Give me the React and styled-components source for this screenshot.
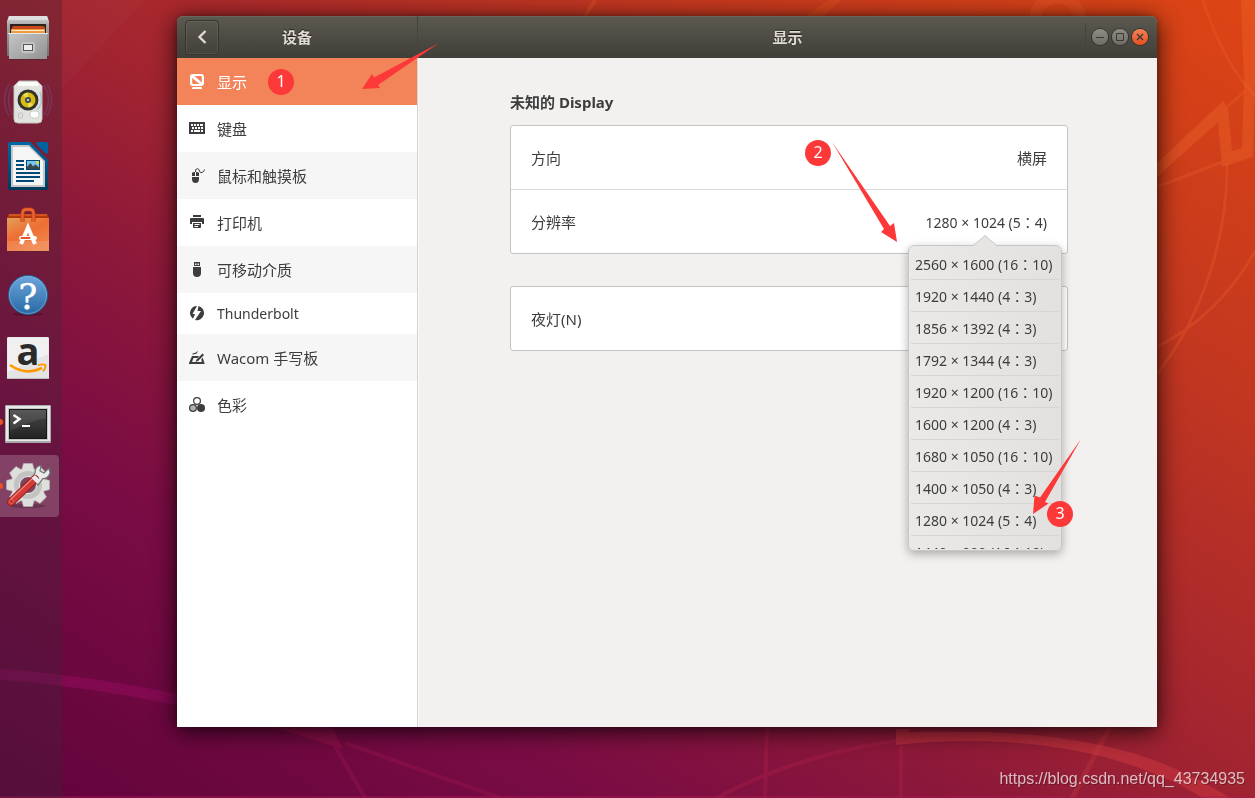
import React from "react";
import styled, { createGlobalStyle } from "styled-components";

const GlobalStyle = createGlobalStyle`
  *, *::before, *::after { box-sizing: border-box; }
  html, body { margin: 0; padding: 0; }
  body {
    font-family: "Noto Sans", "Noto Sans CJK SC", sans-serif;
    font-size: 15px;
    line-height: 20px;
    color: #3d3d3d;
  }
  button { font: inherit; color: inherit; border: 0; padding: 0; background: none; cursor: default; }
  ul { list-style: none; margin: 0; padding: 0; }
  h1, h2 { margin: 0; font-size: 15px; font-weight: 700; }
`;

const Desktop = styled.div`
  position: relative;
  display: flex;
  min-height: 100vh;
  overflow: hidden;
  background: linear-gradient(
    to top right,
    #61033c 0%, #7a0c44 24%, #8e1939 40%, #a02331 50%, #c23720 75%, #dd4514 100%
  );
`;

const WallpaperArt = styled.svg`
  position: absolute;
  inset: 0;
  width: 100%;
  height: 100%;
`;

const Dock = styled.nav`
  position: relative;
  display: flex;
  flex-direction: column;
  gap: 2px;
  width: 62px;
  padding-top: 7px;
  background: rgba(60, 40, 55, 0.3);
`;

const Launcher = styled.button`
  position: relative;
  width: 59px;
  height: 62px;
  padding-left: 4px;
  display: flex;
  align-items: center;
  border-radius: 0 4px 4px 0;
  background: ${(p) => (p.$active ? "rgba(255,255,255,0.2)" : "transparent")};
`;

const LauncherArt = styled.svg`
  overflow: visible;
`;

const RunningDot = styled.span`
  position: absolute;
  left: -3px;
  top: 28px;
  width: 6px;
  height: 6px;
  border-radius: 50%;
  background: #e95420;
`;

const Stage = styled.main`
  position: relative;
  flex: 1;
  display: flex;
  padding: 16px 98px 71px 115px;
`;

const Window = styled.section`
  flex: 1;
  display: flex;
  flex-direction: column;
  border-radius: 7px 7px 0 0;
  background: #f2f1ef;
  box-shadow: 0 4px 24px rgba(0, 0, 0, 0.8), 0 0 6px rgba(0, 0, 0, 0.25);
`;

const TitleBar = styled.header`
  display: flex;
  height: 42px;
  border-radius: 6px 6px 0 0;
  background: linear-gradient(#5c5a50, #3f3e38);
  box-shadow: inset 0 1px #6a685e;
  color: #dfdbd2;
  text-shadow: 0 -1px rgba(0, 0, 0, 0.6);
`;

const BarLeft = styled.div`
  display: grid;
  grid-template-columns: 34px 1fr 34px;
  align-items: center;
  width: 241px;
  padding: 0 8px;
  border-right: 1px solid #45443d;
  text-align: center;
`;

const BarRight = styled.div`
  flex: 1;
  display: grid;
  grid-template-columns: 1fr auto 1fr;
  align-items: center;
`;

const BackButton = styled.button`
  display: grid;
  place-items: center;
  height: 35px;
  border: 1px solid #35342e;
  border-radius: 4px;
  box-shadow: inset 0 0 0 1px rgba(255, 255, 255, 0.08);
`;

const WindowControls = styled.div`
  grid-column: 3;
  justify-self: end;
  display: flex;
  align-items: center;
  gap: 4px;
  height: 28px;
  padding: 0 9px 0 6px;
  border-left: 1px solid #44433c;
`;

const ControlButton = styled.button`
  width: 16px;
  height: 16px;
  border-radius: 50%;
  display: grid;
  place-items: center;
  color: #3a3934;
  background: ${(p) => (p.$close ? "linear-gradient(#f78159, #e4501f)" : "linear-gradient(#908e86, #6d6b64)")};
  box-shadow: 0 0 0 1px #35342f;
`;

const Body = styled.div`
  flex: 1;
  display: flex;
`;

const SideBar = styled.nav`
  width: 241px;
  background: #fff;
  border-right: 1px solid #d5d3d1;
`;

const NavLink = styled.a`
  display: flex;
  align-items: center;
  gap: 12px;
  height: ${(p) => (p.$compact ? "41px" : "47px")};
  padding: 0 12px;
  font-size: ${(p) => (p.$compact ? "14px" : "15px")};
  color: ${(p) => (p.$current ? "#fff" : "#3d3d3d")};
  background: ${(p) => (p.$current ? "#f38459" : p.$shaded ? "#f6f6f6" : "#fff")};
  text-decoration: none;
`;

const Panel = styled.div`
  flex: 1;
  padding: 34px 89px 0 91px;
  border-left: 1px solid #faf9f8;
`;

const PanelInner = styled.div`
  max-width: 640px;
  margin: 0 auto;
`;

const Card = styled.div`
  margin-top: ${(p) => (p.$spaced ? "32px" : "13px")};
  background: #fff;
  border: 1px solid #c5c3c0;
  border-radius: 3px;
`;

const CardRow = styled.div`
  position: relative;
  & + & { border-top: 1px solid #dcdad8; }
`;

const RowButton = styled.button`
  display: flex;
  align-items: center;
  justify-content: space-between;
  width: 100%;
  height: 63px;
  padding: 0 20px;
`;

const Resolution = styled.span`
  padding-top: 2px;
  font-family: "Noto Sans", "Noto Sans CJK TC", sans-serif;
  font-size: 14px;
`;

const Popover = styled.div`
  position: absolute;
  z-index: 2;
  top: 55px;
  right: 5px;
  width: 154px;
  padding: 2px 2px 1px;
  border: 1px solid #c9c7c5;
  border-radius: 6px;
  background: linear-gradient(90deg, #eae9e8, #e2e1e0);
  box-shadow: 0 3px 10px rgba(0, 0, 0, 0.3);
`;

const PopoverArrow = styled.svg`
  position: absolute;
  top: -11px;
  left: 64px;
`;

const OptionList = styled.ul`
  height: 301px;
  overflow: hidden;
`;

const Option = styled.button`
  width: 100%;
  height: 32px;
  padding: 2px 0 0 4px;
  text-align: left;
  white-space: nowrap;
  font-family: "Noto Sans", "Noto Sans CJK TC", sans-serif;
  font-size: 14px;
  border-bottom: 1px solid #d6d5d3;
`;

const Annotations = styled.div`
  position: absolute;
  z-index: 3;
  inset: 0;
  pointer-events: none;
`;

const ArrowLayer = styled.svg`
  position: absolute;
  left: 0;
  top: 0;
`;

const Marker = styled.span`
  position: absolute;
  left: ${(p) => p.$x}px;
  top: ${(p) => p.$y}px;
  width: 26px;
  height: 26px;
  border-radius: 50%;
  background: #fc3838;
  color: #fff;
  font-size: 16px;
  line-height: 24px;
  text-align: center;
`;

const Watermark = styled.span`
  position: absolute;
  right: 10px;
  bottom: 9px;
  font-family: "Liberation Sans", sans-serif;
  font-size: 16px;
  color: rgba(255, 255, 255, 0.7);
  text-shadow: 1px 1px rgba(0, 0, 0, 0.25);
`;

function Wallpaper() {
  return (
    <WallpaperArt viewBox="0 0 1255 798" preserveAspectRatio="none" aria-hidden="true">
      <path d="M62 0H145L62 88Z" fill="#fff" opacity=".02" />
      <path d="M-5 673.500Q90 681 180 700" stroke="#a00d68" strokeWidth="11" opacity=".4" fill="none" />
      <path d="M272 727H332L343 749Z" fill="#b01a50" opacity=".35" />
      <g stroke="#b01a50" strokeWidth="4" opacity=".25" fill="none">
        <path d="M335 746L365 798M345 743L500 798" />
        <path d="M767 727L765 798M901 746V798M710 802Q790 756 896 741" stroke="#c0254a" />
        <path d="M1110 727L1072 798" stroke="#d84040" strokeWidth="5" />
      </g>
      <path d="M896 729V745C1000 734 1120 744 1211 803H1238C1160 752 1080 728 909 732V729Z" fill="#d03a40" opacity=".5" />
      <g fill="#f0682c" opacity=".38">
        <path d="M1241 0H1255V80L1253 157L1222 167L1218 122L1157 177V163L1223 101L1228 108L1232 151L1242 148L1244 83Z" />
        <path d="M805 16L829 0H841L824 16Z" opacity=".6" />
      </g>
      <g stroke="#ee6530" fill="none" opacity=".28">
        <path d="M1035 20C1036 -10 1079 -10 1080 20" strokeWidth="12" strokeOpacity=".9" />
        <path d="M1203 0Q1218 48 1243 82L1257 98M1227 107L1245 91M1157 187L1222 162" strokeWidth="3" />
        <path d="M1227 163C1228 240 1200 320 1157 374M1257 248Q1220 315 1157 347" strokeWidth="3" />
        <path d="M585 16L595 0" strokeWidth="4" />
      </g>
      <path d="M0 797H1255" stroke="#b01855" strokeWidth="2" opacity=".4" />
    </WallpaperArt>
  );
}

const Art = ({ children }) => (
  <LauncherArt width="48" height="48" viewBox="0 0 48 48" aria-hidden="true">{children}</LauncherArt>
);

const FilesArt = () => (
  <Art>
    <defs>
      <linearGradient id="fm1" x2="0" y2="1"><stop stopColor="#d8d8d8" /><stop offset=".25" stopColor="#a5a5a5" /><stop offset="1" stopColor="#6f6f6f" /></linearGradient>
      <linearGradient id="fm2" x2="1" y2="1"><stop stopColor="#c6c6c6" /><stop offset="1" stopColor="#929292" /></linearGradient>
    </defs>
    <path d="M5 2H43L45 7V42H3V7Z" fill="url(#fm1)" />
    <path d="M5 2H43L44 6H4Z" fill="#dedede" />
    <path d="M6 10H42V20H6Z" fill="#2b2320" />
    <path d="M8 13L10 12H39L41 13V20H8Z" fill="#c9481c" />
    <path d="M7 15H41V20H7Z" fill="#ef9a3e" />
    <path d="M8 16H40V17H8Z" fill="#fdebd0" />
    <path d="M5 19H43V45H5Z" fill="url(#fm2)" />
    <path d="M4 19.500H44" stroke="#e8e8e8" />
    <rect x="17" y="28" width="14" height="11" rx="2.500" fill="#c9c9c9" stroke="#b3b3b3" />
    <rect x="19.500" y="30.500" width="9" height="6" fill="#eee" stroke="#555" />
    <path d="M5 45.500H43" stroke="#4e2632" opacity=".7" />
  </Art>
);

const MusicArt = () => (
  <Art>
    <g fill="none" stroke="#6c5c9c" opacity=".35" strokeWidth="1.500">
      <path d="M5 6Q-4 22 5 38M9 7Q0 22 9 37M43 6Q52 22 43 38M40 7Q49 22 40 37" />
    </g>
    <path d="M15 3H33L38 8V41Q38 45 34 45H14Q10 45 10 41V8Z" fill="#e2e2df" stroke="#c5c5c0" />
    <path d="M15 4H33L35 8H13Z" fill="#fbfbfa" />
    <circle cx="24" cy="22" r="10.500" fill="#35352f" />
    <circle cx="24" cy="22" r="7.500" fill="#d8bc10" />
    <path d="M19 17A7.500 7.500 0 0 1 24 14.500L24 22ZM29 27A7.500 7.500 0 0 1 24 29.500V22Z" fill="#f0dc50" />
    <circle cx="24" cy="22" r="3" fill="#3b444c" />
    <circle cx="24" cy="22" r="1.300" fill="#b8c2c8" />
    <rect x="26" y="33" width="9" height="7" rx="3" fill="#fff" stroke="#bbb" strokeWidth=".7" />
    <rect x="14.500" y="35" width="4" height="5" rx="1" fill="none" stroke="#c2c2be" />
    <path d="M36 14Q40 25 33 32" stroke="#a6bdd8" strokeWidth="1.500" fill="none" opacity=".8" />
  </Art>
);

const WriterArt = () => (
  <Art>
    <defs>
      <linearGradient id="w1" x2="0" y2="1"><stop stopColor="#0069a5" /><stop offset="1" stopColor="#003a5c" /></linearGradient>
    </defs>
    <path d="M6 0H26L44 18V46Q44 48 42 48H6Q4 48 4 46V2Q4 0 6 0Z" fill="url(#w1)" />
    <path d="M32 0H42Q44 0 44 2V12Q41 12 39 9L34 4Q32 2 32 0Z" fill="#0063a0" />
    <path d="M7 3H25L41 19V45H7Z" fill="#c7c7c7" />
    <path d="M9 5H25L39 19V43H9Z" fill="#f5f5f5" />
    <path d="M12 19H20M12 23H20M12 27H20M12 31H36M12 35H36M12 39H30" stroke="#004b76" strokeWidth="2" />
    <path d="M22 18H36V28H22Z" fill="#004b76" />
    <path d="M23 19H35V27H23Z" fill="#77c6ec" />
    <path d="M23 27V25L26.500 21L29 24.500L31.500 22.500L35 25.500V27Z" fill="#3d4548" />
    <path d="M32 19H35V22H33Z" fill="#f2d33c" />
  </Art>
);

const SoftwareArt = () => (
  <Art>
    <defs>
      <linearGradient id="s1" x2=".6" y2="1"><stop stopColor="#e2a05c" /><stop offset=".5" stopColor="#ef6f33" /><stop offset="1" stopColor="#f0854c" /></linearGradient>
    </defs>
    <path d="M5 8H43L45 12H3Z" fill="#b5380d" />
    <path d="M5 8H43V10H5Z" fill="#d55221" />
    <path d="M3 12H45V45H3Z" fill="url(#s1)" />
    <path d="M3 35H45V45H3Z" fill="#fff" opacity=".1" />
    <path d="M18.500 16V7Q19 3.500 22 3.500H26Q29 3.500 29.500 7V16" fill="none" stroke="#b63b12" strokeWidth="4" />
    <path d="M18.500 16V7Q19 3.500 22 3.500H26Q29 3.500 29.500 7V16" fill="none" stroke="#ee6430" strokeWidth="2.400" />
    <path d="M17 38L24 21.500L31 38" fill="none" stroke="#fff" strokeWidth="4" />
    <rect x="15" y="30" width="18" height="4" rx="2" fill="#fff" />
    <rect x="16.500" y="31" width="10" height="2" rx="1" fill="#e95420" />
    <path d="M3 45.500H45" stroke="#5d2030" opacity=".7" />
  </Art>
);

const HelpArt = () => (
  <Art>
    <defs>
      <linearGradient id="h1" x2="0" y2="1"><stop stopColor="#6ca6dc" /><stop offset="1" stopColor="#2869a4" /></linearGradient>
    </defs>
    <ellipse cx="24" cy="44" rx="15" ry="2" opacity=".2" />
    <circle cx="24" cy="25" r="19.500" fill="url(#h1)" stroke="#245f92" />
    <circle cx="24" cy="25" r="18.500" fill="none" stroke="#8cbbe4" strokeWidth=".8" opacity=".7" />
    <text x="24" y="39" textAnchor="middle" fontFamily="DejaVu Serif, serif" fontSize="35" fill="#fff" stroke="#fff" strokeWidth=".5">?</text>
  </Art>
);

const AmazonArt = () => (
  <Art>
    <rect x="3" y="3" width="42" height="42" rx="1.500" fill="#e4e4e4" />
    <path d="M3 44.500H45" stroke="#bdbdbd" />
    <path d="M3.500 3.500H44.500V20L3.500 38Z" fill="#f0f0f0" />
    <text x="24" y="31" textAnchor="middle" fontFamily="Open Sans, sans-serif" fontWeight="700" fontSize="38" fill="#2b2b2b">a</text>
    <path d="M6 31Q22 42 38 34" fill="none" stroke="#f90" strokeWidth="2.600" />
    <path d="M34 31.500Q38 29.500 41.500 31Q42 34 39 37.500" fill="none" stroke="#f90" strokeWidth="1.800" />
  </Art>
);

const TerminalArt = () => (
  <Art>
    <defs>
      <linearGradient id="t1" x2="0" y2="1"><stop stopColor="#4a4a4a" /><stop offset="1" stopColor="#232323" /></linearGradient>
    </defs>
    <rect x="1" y="7" width="46" height="38" rx="1" fill="#a9a9a9" />
    <path d="M2 8H46V43H2Z" fill="#e8e8e8" />
    <path d="M4 10H44V42H4Z" fill="#c4c4c4" />
    <path d="M5 11H43V41H5Z" fill="#171717" />
    <path d="M6 12H42V40H6Z" fill="url(#t1)" />
    <path d="M24 12H42V20Q30 22 6 33V12Z" fill="#fff" opacity=".08" />
    <path d="M9.500 17L15.500 21L9.500 25.500" stroke="#fff" strokeWidth="2.500" fill="none" />
    <path d="M18 28H26" stroke="#fff" strokeWidth="2" />
  </Art>
);

const SettingsArt = () => (
  <Art>
    <ellipse cx="24" cy="44" rx="18" ry="2" opacity=".2" />
    <g fill="#dededc" stroke="#b5b5b2" strokeWidth=".7">
      {[0, 45, 90, 135].map((a) => (
        <path key={a} d="M19.500 1.500H28.500L30 7V39L28.500 44.500H19.500L18 39V7Z" transform={`rotate(${a} 24 23)`} />
      ))}
    </g>
    <circle cx="24" cy="23" r="17" fill="#dededc" />
    <circle cx="24" cy="23" r="14" fill="#c3c3c1" />
    <circle cx="24" cy="23" r="8.500" fill="#7e4560" stroke="#eee" />
    <path d="M28 17L34 23L39 16.500Q44 17 46 11L45 6L40 11L36 9L37 3.500Q31 4 31 11Z" fill="#e9ebea" stroke="#70746f" strokeWidth="1.200" />
    <path d="M7 40L31 17" stroke="#8f1c1c" strokeWidth="8" strokeLinecap="round" />
    <path d="M7 40L31 17" stroke="#d43a35" strokeWidth="6.400" strokeLinecap="round" />
    <path d="M7 37L29 16" stroke="#ee8078" strokeWidth="1.300" strokeLinecap="round" />
    <circle cx="7.500" cy="39.500" r="1.800" fill="#a02525" stroke="#ee8a80" strokeWidth=".7" />
    <path d="M27.500 16L33 21.500L36 18L31 13Z" fill="#e9ebea" />
  </Art>
);

const Glyph = ({ children }) => (
  <svg width="16" height="16" viewBox="0 0 16 16" fill="currentColor" aria-hidden="true">{children}</svg>
);

const DisplayGlyph = () => (
  <Glyph>
    <path fillRule="evenodd" d="M4 0H12Q15 0 15 3V9Q15 12 12 12H4Q1 12 1 9V3Q1 0 4 0ZM3.200 4V9Q3.200 10 4.500 10H10.500ZM5.500 2L12.800 8.500V3Q12.800 2 12 2Z" />
    <path d="M4 13H12Q13 13 13 15H3Q3 13 4 13Z" />
  </Glyph>
);
const KeyboardGlyph = () => (
  <Glyph>
    <path fillRule="evenodd" d="M0 1.500Q0 1 .5 1H15.500Q16 1 16 1.500V12.500Q16 13 15.500 13H.5Q0 13 0 12.500ZM2 3V5H4V3ZM5 3V5H7V3ZM8 3V5H10V3ZM11 3V5H14V3ZM3 6V8H5V6ZM6 6V8H8V6ZM9 6V8H11V6ZM12 6V8H14V6ZM2 9V11H4V9ZM5 9V11H11V9ZM12 9V11H14V9Z" />
  </Glyph>
);
const MouseGlyph = () => (
  <Glyph>
    <path d="M3 8V5Q3 4 6 4V8ZM7 4Q10 4 10 5V8H7ZM3 9H10V11Q10 15 6.500 15Q3 15 3 11Z" />
    <path d="M6.500 4Q6 .7 8.500 .7Q10 .7 10.500 3Q11 5.500 13 4.500Q15 4 15.500 1.500" fill="none" stroke="currentColor" />
  </Glyph>
);
const PrinterGlyph = () => (
  <Glyph>
    <path d="M4 0H12V2H4ZM2 3H14Q15 3 15 4V9H13V7H3V9H1V4Q1 3 2 3Z" />
    <path fillRule="evenodd" d="M4 8H12V12Q12 13 11 13H5Q4 13 4 12ZM5.500 9V10H10.500V9ZM5.500 11V12H9V11Z" />
  </Glyph>
);
const UsbGlyph = () => (
  <Glyph>
    <path fillRule="evenodd" d="M5 0H11V4H5ZM6 1.500V3H7.500V1.500ZM8.500 1.500V3H10V1.500ZM4 5H12V11Q12 15 8 15Q4 15 4 11Z" />
  </Glyph>
);
const ThunderboltGlyph = () => (
  <Glyph>
    <path d="M8 0A7 7 0 0 0 4 12.700L6 8H3.500L8 0ZM9.500 0L8.500 5H12L6 14A7 7 0 0 0 9.500 0Z" />
  </Glyph>
);
const TabletGlyph = () => (
  <Glyph>
    <path fillRule="evenodd" d="M3 6H10L8.500 8H4.500L3 12H12.800L12.300 9.500L13.600 7.500L15.500 13V14H0V13Z" />
    <path d="M13.500 3.500L15 5L9 11L6.500 12L7.500 9.500ZM3 4.500Q3 3 5.500 3Q8 2.800 8.500 .5Q9 4 5 4.200Z" />
  </Glyph>
);
const ColorGlyph = () => (
  <Glyph>
    <circle cx="4" cy="11" r="3.400" fill="#b0b0b0" stroke="currentColor" strokeWidth="1.200" />
    <circle cx="12" cy="11" r="4" />
    <circle cx="8" cy="4" r="3.400" fill="none" stroke="currentColor" strokeWidth="1.200" />
  </Glyph>
);

const launchers = [
  { name: "文件", Icon: FilesArt },
  { name: "Rhythmbox", Icon: MusicArt },
  { name: "LibreOffice Writer", Icon: WriterArt },
  { name: "Ubuntu 软件", Icon: SoftwareArt },
  { name: "帮助", Icon: HelpArt },
  { name: "Amazon", Icon: AmazonArt },
  { name: "终端", Icon: TerminalArt, running: true },
  { name: "设置", Icon: SettingsArt, running: true, active: true },
];

const sections = [
  { label: "显示", Icon: DisplayGlyph },
  { label: "键盘", Icon: KeyboardGlyph },
  { label: "鼠标和触摸板", Icon: MouseGlyph },
  { label: "打印机", Icon: PrinterGlyph },
  { label: "可移动介质", Icon: UsbGlyph },
  { label: "Thunderbolt", Icon: ThunderboltGlyph, compact: true },
  { label: "Wacom 手写板", Icon: TabletGlyph },
  { label: "色彩", Icon: ColorGlyph },
];

const resolutions = [
  "2560 × 1600 (16：10)",
  "1920 × 1440 (4：3)",
  "1856 × 1392 (4：3)",
  "1792 × 1344 (4：3)",
  "1920 × 1200 (16：10)",
  "1600 × 1200 (4：3)",
  "1680 × 1050 (16：10)",
  "1400 × 1050 (4：3)",
  "1280 × 1024 (5：4)",
  "1440 × 900 (16：10)",
];

export default function App() {
  return (
    <Desktop>
      <GlobalStyle />
      <Wallpaper />
      <Dock aria-label="Dock">
        {launchers.map(({ name, Icon, running, active }) => (
          <Launcher key={name} aria-label={name} $active={active}>
            {running && <RunningDot />}
            <Icon />
          </Launcher>
        ))}
      </Dock>

      <Stage>
        <Window>
          <TitleBar>
            <BarLeft>
              <BackButton aria-label="返回">
                <svg width="10" height="14" viewBox="0 0 10 14" fill="none" stroke="#dfdbd2" strokeWidth="2.400" aria-hidden="true">
                  <path d="M8.500 1L2.500 7L8.500 13" />
                </svg>
              </BackButton>
              <h2>设备</h2>
            </BarLeft>
            <BarRight>
              <span />
              <h1>显示</h1>
              <WindowControls>
                <ControlButton aria-label="最小化">
                  <svg width="16" height="16" viewBox="0 0 16 16" stroke="currentColor" aria-hidden="true"><path d="M4 8.500H12" /></svg>
                </ControlButton>
                <ControlButton aria-label="最大化">
                  <svg width="16" height="16" viewBox="0 0 16 16" stroke="currentColor" fill="none" aria-hidden="true"><path d="M4.500 4.500H11.500V11.500H4.500Z" /></svg>
                </ControlButton>
                <ControlButton aria-label="关闭" $close>
                  <svg width="16" height="16" viewBox="0 0 16 16" stroke="currentColor" strokeWidth="1.400" aria-hidden="true"><path d="M5 5L11 11M11 5L5 11" /></svg>
                </ControlButton>
              </WindowControls>
            </BarRight>
          </TitleBar>

          <Body>
            <SideBar aria-label="设备">
              <ul>
                {sections.map(({ label, Icon, compact }, i) => (
                  <li key={label}>
                    <NavLink href="#" $compact={compact} $current={i === 0} $shaded={i % 2 === 0}>
                      <Icon />
                      {label}
                    </NavLink>
                  </li>
                ))}
              </ul>
            </SideBar>

            <Panel>
              <PanelInner>
                <h2>未知的 Display</h2>
                <Card>
                  <CardRow>
                    <RowButton>
                      <span>方向</span>
                      <span>横屏</span>
                    </RowButton>
                  </CardRow>
                  <CardRow>
                    <RowButton aria-expanded="true">
                      <span>分辨率</span>
                      <Resolution>1280 × 1024 (5：4)</Resolution>
                    </RowButton>
                    <Popover>
                      <PopoverArrow width="24" height="12" viewBox="0 0 24 12" aria-hidden="true">
                        <path d="M0 12L1 10.500L12 0L23 10.500L24 12Z" fill="#e6e5e4" />
                        <path d="M.5 10.500L12 .5L23.500 10.500" fill="none" stroke="#c9c7c5" />
                      </PopoverArrow>
                      <OptionList>
                        {resolutions.map((r) => (
                          <li key={r}>
                            <Option>{r}</Option>
                          </li>
                        ))}
                      </OptionList>
                    </Popover>
                  </CardRow>
                </Card>
                <Card $spaced>
                  <CardRow>
                    <RowButton>
                      <span>夜灯(N)</span>
                    </RowButton>
                  </CardRow>
                </Card>
              </PanelInner>
            </Panel>
          </Body>
        </Window>
      </Stage>

      <Annotations>
        <ArrowLayer width="1100" height="540" viewBox="0 0 1100 540" fill="#fc3838" aria-hidden="true">
          <path d="M439 43L374 77.500L372 74L362 89L380 88L378 85Z" />
          <path d="M832 142L890 226L894 223L897 242L881 232L884 229Z" />
          <path d="M1081 439L1045 502L1048.500 503.500L1033 514L1034.500 495.500L1040 497.500Z" />
        </ArrowLayer>
        <Marker $x={268} $y={69}>1</Marker>
        <Marker $x={805} $y={140}>2</Marker>
        <Marker $x={1047} $y={501}>3</Marker>
        <Watermark>https://blog.csdn.net/qq_43734935</Watermark>
      </Annotations>
    </Desktop>
  );
}
